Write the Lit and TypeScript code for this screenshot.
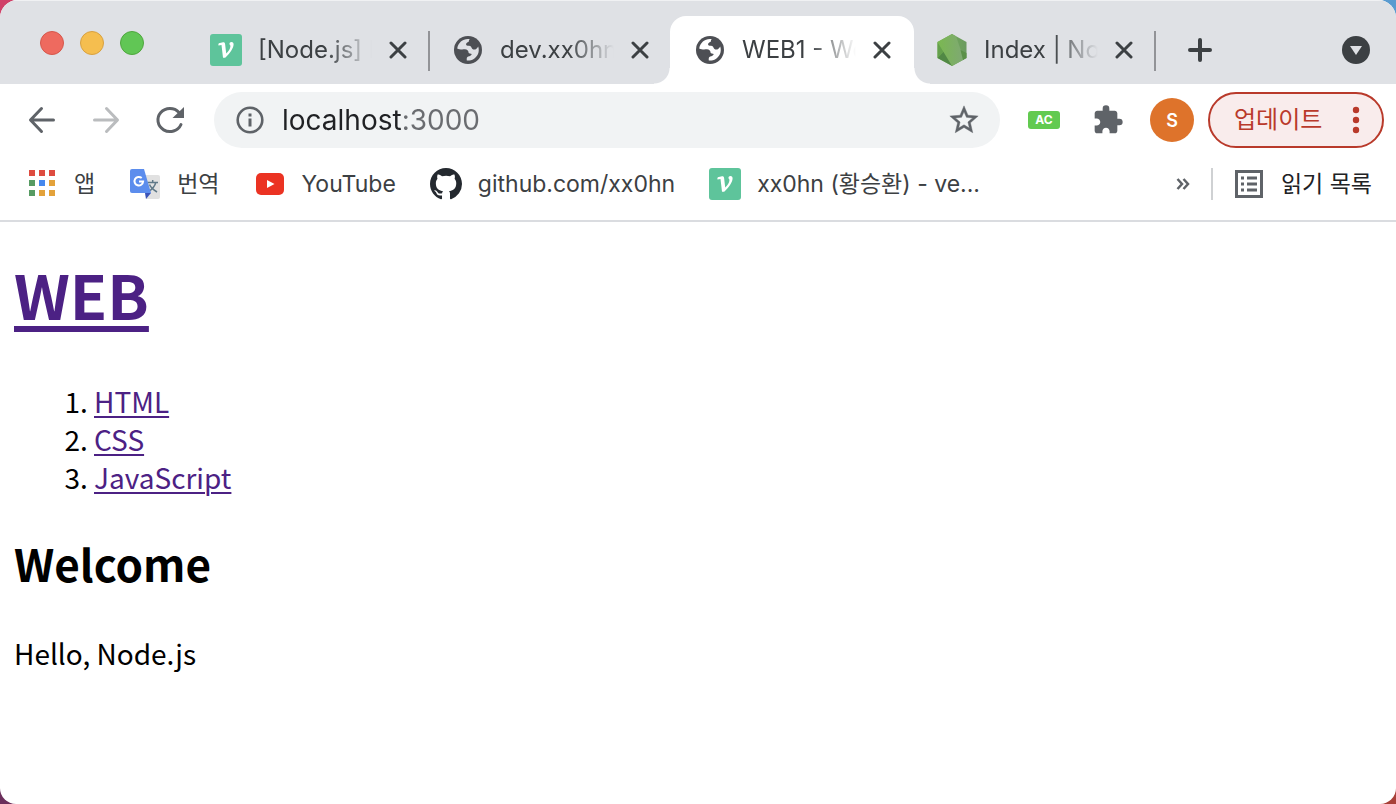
import { LitElement, html, css, svg } from "lit";
import { customElement } from "lit/decorators.js";
import { classMap } from "lit/directives/class-map.js";

const velog = html`<svg class="i32" viewBox="0 0 32 32" aria-hidden="true">
  <rect width="32" height="32" rx="3" fill="#5ec49b" />
  <path fill="#fff" d="m8.300 10.800.5-1.600 4.200-.9c1.200-.2 1.900.4 2.100 1.700l1.100 9.500c2.500-2.500 4-5 4.200-7.100.1-.9-.3-1.200-.8-1.800-.5-1.200.4-2.500 1.900-2.500 1.400 0 2.200.9 2.100 2.500-.2 3.700-3.300 8.500-8.400 13.200h-2.200L11.500 11.100l-3 .3Z" />
</svg>`;

const globe = html`<svg class="i28" viewBox="0 0 28 28" aria-hidden="true">
  <circle cx="14" cy="14" r="14" fill="#4d4f54" />
  <path fill="var(--hole)" d="M15.800 3.200C9.600 2.200 4.400 6 3.200 12.400c2.400 1.300 5.200 1.100 7.700.9 2.200 0 3.600 1.500 3.700 3.400.2 1.200 2.200.7 3.200 1.300-.6 1.600-2 2.300-3.600 2.500-1.300.3-1.700 1.600-1.400 4 4.600.5 9-2 11.200-6.600 1-2.300 1-5.200.2-7.500-1.200 2-2.800 3.600-5 3-1.800-.5-1.500-2.600-3-3.300-1.500-.5-3.600.2-4.100-1.300-.4-1.600 1.200-2.600 2.500-3.100 1-.7-.5-1.400 1.200-2.500Z" />
</svg>`;

const node = html`<svg class="i32" viewBox="0 0 32 32" aria-hidden="true">
  <defs>
    <linearGradient id="hexagon" x1="0" y1="0" x2="1" y2="0">
      <stop offset="0" stop-color="#76b354" /><stop offset="1" stop-color="#6b9a60" />
    </linearGradient>
    <linearGradient id="facet" x1="0" y1="0" x2="1" y2="0">
      <stop offset="0" stop-color="#7ab850" /><stop offset="1" stop-color="#7fa874" />
    </linearGradient>
  </defs>
  <path fill="url(#hexagon)" d="M16 0 30.500 8v16L16 32 1.500 24V8Z" />
  <path fill="#518845" d="M1.500 24 8 17l8.500 15Z" />
  <path fill="#65a04c" d="M1.500 8v16L8 17.500Z" />
  <path fill="url(#facet)" d="M1.500 8 16 0l4 2.200 8 23.200L16 32Z" />
  <path fill="#5b9048" d="m24.500 16 6 3v5l-3.500 2Z" />
</svg>`;

const apps = html`<svg class="i32" viewBox="0 0 32 32" aria-hidden="true">
  ${["#de4c40", "#de4c40", "#de4c40", "#579b63", "#4688ee", "#e3a23b", "#579b63", "#e3a23b", "#e3a23b"].map(
    (c, i) => svg`<rect x=${3 + (i % 3) * 10} y=${2 + Math.floor(i / 3) * 10} width="6" height="6" fill=${c} />`
  )}
</svg>`;

const translate = html`<svg class="i32" viewBox="0 0 32 32" aria-hidden="true">
  <path fill="#e1e1e1" d="M14 7h15a2 2 0 0 1 2 2v20a2 2 0 0 1-2 2H17Z" />
  <path fill="none" stroke="#607988" stroke-width="1.500" d="M18.500 14.500h10.500M23.700 12v2.500M26.800 14.500c-1 4-3.500 6.500-7 9M20.500 16.500c1.200 3 4 5.300 7.500 7.500" />
  <path fill="#3a53b8" d="M16 25h6l-5 6Z" />
  <path fill="#5c8ded" d="M3 1h12l7 24H3a2 2 0 0 1-2-2V3a2 2 0 0 1 2-2Z" />
  <path fill="none" stroke="#fff" stroke-width="2" d="M12.700 10a4.300 4.300 0 1 0 1.400 3.500H10" />
</svg>`;

const youtube = html`<svg class="i32" viewBox="0 0 32 32" aria-hidden="true">
  <rect x="2" y="5" width="28" height="22" rx="5" fill="#eb3323" />
  <path fill="#fff" d="m13 12 7.500 4-7.500 4Z" />
</svg>`;

const github = html`<svg class="i32" viewBox="0 0 16 16" aria-hidden="true">
  <path fill="#24292f" d="M8 0C3.580 0 0 3.580 0 8c0 3.540 2.290 6.530 5.470 7.590.4.070.55-.17.55-.38 0-.19-.01-.82-.01-1.490-2.010.37-2.530-.49-2.690-.94-.09-.23-.48-.94-.82-1.130-.28-.15-.68-.52-.01-.53.63-.01 1.080.58 1.230.82.72 1.210 1.870.87 2.330.66.07-.52.28-.87.51-1.070-1.780-.2-3.640-.89-3.640-3.950 0-.87.31-1.590.82-2.150-.08-.2-.36-1.020.08-2.120 0 0 .67-.21 2.200.82.64-.18 1.320-.27 2-.27s1.360.09 2 .27c1.530-1.040 2.200-.82 2.200-.82.44 1.100.16 1.920.08 2.120.51.56.82 1.270.82 2.150 0 3.070-1.870 3.750-3.650 3.950.29.25.54.73.54 1.480 0 1.070-.01 1.930-.01 2.200 0 .21.15.46.55.38A8.010 8.010 0 0 0 16 8c0-4.420-3.580-8-8-8Z" />
</svg>`;

const TABS = [
  { icon: velog, title: "[Node.js] Node", separator: true },
  { icon: globe, title: "dev.xx0hn" },
  { icon: globe, title: "WEB1 - Welcome", active: true },
  { icon: node, title: "Index | Node.js", separator: true },
];

const BOOKMARKS = [
  { icon: apps, label: "앱" },
  { icon: translate, label: "번역" },
  { icon: youtube, label: "YouTube" },
  { icon: github, label: "github.com/xx0hn" },
  { icon: velog, label: "xx0hn (황승환) - ve..." },
];

@customElement("browser-tabs")
class BrowserTabs extends LitElement {
  static styles = css`
    :host { display: flex; align-items: flex-end; height: 84px; padding-right: 24px; background: #dfe1e5; box-shadow: inset 0 1px #f0f1f3; --hole: #dfe1e5; }
    button { border: 0; padding: 0; background: none; font: inherit; color: inherit; display: grid; place-items: center; flex: none; }
    .lights { display: flex; gap: 16px; align-self: flex-start; padding: 31px 42px 0 40px; }
    .light { width: 24px; height: 24px; border-radius: 50%; border: 1px solid #d6574b; background: #ee6a5f; }
    .min { background: #f5be4f; border-color: #d8a141; }
    .max { background: #61c655; border-color: #4fa73e; }
    .tab { position: relative; display: flex; align-items: center; flex: 0 1 242px; min-width: 0; height: 68px; box-sizing: border-box; padding: 0 14px 0 24px; color: #3c4043; }
    .icon { display: grid; place-items: center; width: 32px; flex: none; margin-right: 16px; position: relative; }
    .title { flex: 1; min-width: 0; margin-right: 10px; position: relative; overflow: hidden; white-space: nowrap; font-size: 24px; line-height: 32px; -webkit-mask-image: linear-gradient(to right, #000 60%, transparent); mask-image: linear-gradient(to right, #000 60%, transparent); }
    .close { width: 32px; height: 32px; position: relative; }
    .active { --hole: #fff; }
    .active::before { content: ""; position: absolute; inset: 0 -2px 0 0; background: #fff; border-radius: 16px 16px 0 0; }
    .foot { position: absolute; bottom: 0; width: 16px; height: 16px; background: radial-gradient(circle at 0 0, transparent 15px, #fff 16px); left: -16px; }
    .foot.end { left: auto; right: -18px; background: radial-gradient(circle at 100% 0, transparent 15px, #fff 16px); }
    .separator::after { content: ""; position: absolute; right: -2px; top: 15px; width: 2px; height: 40px; background: #929397; }
    .i32 { width: 32px; height: 32px; }
    .i28 { width: 28px; height: 28px; }
    .new, .menu { height: 68px; width: 28px; }
    .new { margin-left: 32px; }
    .menu { margin-left: auto; margin-right: 2px; }
  `;
  render() {
    return html`
      <div class="lights">
        <button class="light" aria-label="Close window"></button>
        <button class="light min" aria-label="Minimize"></button>
        <button class="light max" aria-label="Zoom"></button>
      </div>
      ${TABS.map(
        (t) => html`<div class=${classMap({ tab: true, active: !!t.active, separator: !!t.separator })}>
          ${t.active ? html`<span class="foot"></span><span class="foot end"></span>` : ""}
          <span class="icon">${t.icon}</span>
          <span class="title">${t.title}</span>
          <button class="close" aria-label="Close tab">
            <svg width="18" height="18" viewBox="0 0 18 18"><path d="m2 2 14 14M16 2 2 16" stroke="#3c4043" stroke-width="3" stroke-linecap="round" /></svg>
          </button>
        </div>`
      )}
      <button class="new" aria-label="New tab">
        <svg width="24" height="24" viewBox="0 0 24 24"><path d="M12 2v20M2 12h20" stroke="#3c4043" stroke-width="4" stroke-linecap="round" /></svg>
      </button>
      <button class="menu" aria-label="Search tabs">
        <svg class="i28" viewBox="0 0 28 28"><circle cx="14" cy="14" r="14" fill="#3c4043" /><path d="M8 10h12l-6 9Z" fill="#dfe1e5" /></svg>
      </button>
    `;
  }
}

@customElement("browser-toolbar")
class BrowserToolbar extends LitElement {
  static styles = css`
    :host { display: flex; align-items: center; height: 72px; box-sizing: border-box; padding: 0 12px 0 26px; }
    button { border: 0; padding: 0; background: none; font: inherit; color: inherit; display: grid; place-items: center; flex: none; }
    .nav { width: 32px; height: 32px; margin-right: 32px; }
    .nav.last { margin-right: 28px; }
    .omnibox { flex: 1; min-width: 0; height: 56px; box-sizing: border-box; border-radius: 28px; background: #f1f3f4; display: flex; align-items: center; padding: 0 18px 0 20px; }
    .info { width: 32px; height: 32px; margin-right: 16px; }
    .url { flex: 1; min-width: 0; border: 0; padding: 0; outline: 0; height: 40px; font: inherit; font-size: 28px; color: transparent; caret-color: #202124; background: linear-gradient(to right, #202124 120px, #6a6c70 120px); -webkit-background-clip: text; background-clip: text; }
    .star { width: 36px; height: 36px; }
    .badge { margin-left: 28px; width: 32px; height: 18px; border-radius: 3px; background: #62ca50; color: #fff; font-size: 12px; line-height: 18px; font-weight: 700; }
    .puzzle { width: 32px; height: 32px; margin: 0 26px 0 32px; }
    .avatar { width: 44px; height: 44px; border-radius: 50%; background: #de732b; color: #fff; font-size: 18px; font-weight: 600; }
    .update { margin-left: 14px; width: 176px; height: 56px; box-sizing: border-box; border: 2px solid #b93a2b; border-radius: 28px; background: #f9ecec; color: #b93a2b; font-size: 24px; line-height: 32px; display: flex; align-items: center; justify-content: space-between; padding: 0 22px 0 24px; }
  `;
  render() {
    return html`
      <button class="nav" aria-label="Back">
        <svg width="32" height="32" viewBox="0 0 32 32" fill="none" stroke="#5f6368" stroke-width="3" stroke-linecap="round" stroke-linejoin="round"><path d="M27.500 16H5M15.500 4.500 4.500 16l11 11.500" /></svg>
      </button>
      <button class="nav" aria-label="Forward">
        <svg width="32" height="32" viewBox="0 0 32 32" fill="none" stroke="#babcbe" stroke-width="3" stroke-linecap="round" stroke-linejoin="round"><path d="M4.500 16H27M16.500 4.500l11 11.500-11 11.500" /></svg>
      </button>
      <button class="nav last" aria-label="Reload">
        <svg width="32" height="32" viewBox="0 0 32 32"><path d="M27 20.500A12 11.500 0 1 1 25 8.500" fill="none" stroke="#5f6368" stroke-width="3" stroke-linecap="round" /><path d="M30 3v11H18.500Z" fill="#5f6368" /></svg>
      </button>
      <div class="omnibox">
        <button class="info" aria-label="Site information">
          <svg width="28" height="28" viewBox="0 0 28 28"><circle cx="14" cy="14" r="12.300" fill="none" stroke="#5f6368" stroke-width="2.600" /><path d="M12.500 7.500h3v3h-3zM12.500 12.500h3v8h-3z" fill="#5f6368" /></svg>
        </button>
        <input class="url" type="text" aria-label="Address" .value=${"localhost:3000"} spellcheck="false" />
        <button class="star" aria-label="Bookmark this page">
          <svg width="34" height="34" viewBox="0 0 24 24"><path fill="#5f6368" stroke="#5f6368" stroke-width=".3" d="m22 9.240-7.190-.62L12 2 9.190 8.630 2 9.240l5.460 4.730L5.820 21 12 17.270 18.180 21l-1.630-7.030L22 9.240zM12 15.400l-3.760 2.270 1-4.280-3.320-2.880 4.380-.38L12 6.100l1.710 4.040 4.380.38-3.320 2.880 1 4.280L12 15.400z" /></svg>
        </button>
      </div>
      <button class="badge">AC</button>
      <button class="puzzle" aria-label="Extensions">
        <svg width="32" height="32" viewBox="0 0 24 24"><path fill="#5f6368" d="M20.500 11H19V7c0-1.100-.9-2-2-2h-4V3.500a2.500 2.500 0 0 0-5 0V5H4c-1.100 0-1.990.9-1.990 2v3.800H3.500c1.490 0 2.700 1.210 2.700 2.700s-1.210 2.700-2.700 2.700H2V20c0 1.100.9 2 2 2h3.800v-1.500c0-1.490 1.210-2.700 2.700-2.700s2.700 1.210 2.700 2.700V22H17c1.100 0 2-.9 2-2v-4h1.500a2.500 2.500 0 0 0 0-5z" /></svg>
      </button>
      <button class="avatar" aria-label="Profile S">S</button>
      <button class="update">
        <span>업데이트</span>
        <svg width="8" height="28" viewBox="0 0 8 28" fill="#b93a2b"><circle cx="4" cy="4" r="3.200" /><circle cx="4" cy="14" r="3.200" /><circle cx="4" cy="24" r="3.200" /></svg>
      </button>
    `;
  }
}

@customElement("bookmarks-bar")
class BookmarksBar extends LitElement {
  static styles = css`
    :host { display: flex; align-items: center; height: 66px; box-sizing: border-box; padding: 0 24px 8px 26px; border-bottom: 2px solid #dadce0; font-size: 23px; line-height: 32px; color: #3c4043; }
    button { border: 0; padding: 0; background: none; font: inherit; color: inherit; display: flex; align-items: center; flex: none; }
    .list { display: flex; gap: 34px; flex: 1; min-width: 0; overflow: hidden; }
    .bookmark { display: flex; align-items: center; gap: 16px; flex: none; color: inherit; text-decoration: none; white-space: nowrap; }
    .i32 { width: 32px; height: 32px; flex: none; }
    .more { margin-right: 21px; }
    .reading { border-left: 2px solid #cfd1d3; padding-left: 20px; gap: 16px; color: #202124; height: 32px; }
  `;
  render() {
    return html`
      <nav class="list" aria-label="Bookmarks">
        ${BOOKMARKS.map((b) => html`<a class="bookmark" href="#">${b.icon}<span>${b.label}</span></a>`)}
      </nav>
      <button class="more" aria-label="More bookmarks">
        <svg width="14" height="14" viewBox="0 0 14 14" fill="none" stroke="#5f6368" stroke-width="2.500"><path d="m1.500 2 4.500 5-4.500 5M7.500 2 12 7l-4.500 5" /></svg>
      </button>
      <button class="reading">
        <svg class="i32" viewBox="0 0 32 32"><rect x="3.500" y="3.500" width="25" height="25" fill="none" stroke="#5f6368" stroke-width="3" /><path d="M8 8.500h3v3H8zM8 14.500h3v3H8zM8 20.500h3v3H8zM14 8.500h10v3H14zM14 14.500h10v3H14zM14 20.500h10v3H14z" fill="#5f6368" /></svg>
        <span>읽기 목록</span>
      </button>
    `;
  }
}

@customElement("app-root")
class AppRoot extends LitElement {
  static styles = css`
    :host { display: block; background: linear-gradient(#5a9bd0 50%, #a84038 50%) right / 50% 100% no-repeat, linear-gradient(#d04068 50%, #6b2f5c 50%) left / 50% 100% no-repeat; font-family: Inter, "Noto Sans CJK KR", sans-serif; }
    .window { min-height: 100vh; background: #fff; border-radius: 18px 18px 16px 16px; overflow: hidden; }
    .page { padding: 0 16px 16px 14px; display: flow-root; font-family: "Noto Sans CJK KR", sans-serif; font-size: 28px; line-height: 38px; color: #000; }
    a { color: #4c2184; text-decoration-thickness: 2px; text-underline-offset: 3px; }
    h1 { font-size: 61px; line-height: 76px; margin: 34px 0 50px; }
    h1 a { text-decoration-thickness: 6px; text-underline-offset: 6px; }
    ol { margin: 0 0 38px; padding-left: 80px; }
    h2 { font-size: 44px; line-height: 58px; margin: 0 0 42px; }
    p { margin: 0; }
  `;
  render() {
    return html`
      <div class="window">
        <browser-tabs></browser-tabs>
        <browser-toolbar></browser-toolbar>
        <bookmarks-bar></bookmarks-bar>
        <main class="page">
          <h1><a href="#">WEB</a></h1>
          <ol>
            <li><a href="#">HTML</a></li>
            <li><a href="#">CSS</a></li>
            <li><a href="#">JavaScript</a></li>
          </ol>
          <h2>Welcome</h2>
          <p>Hello, Node.js</p>
        </main>
      </div>
    `;
  }
}
